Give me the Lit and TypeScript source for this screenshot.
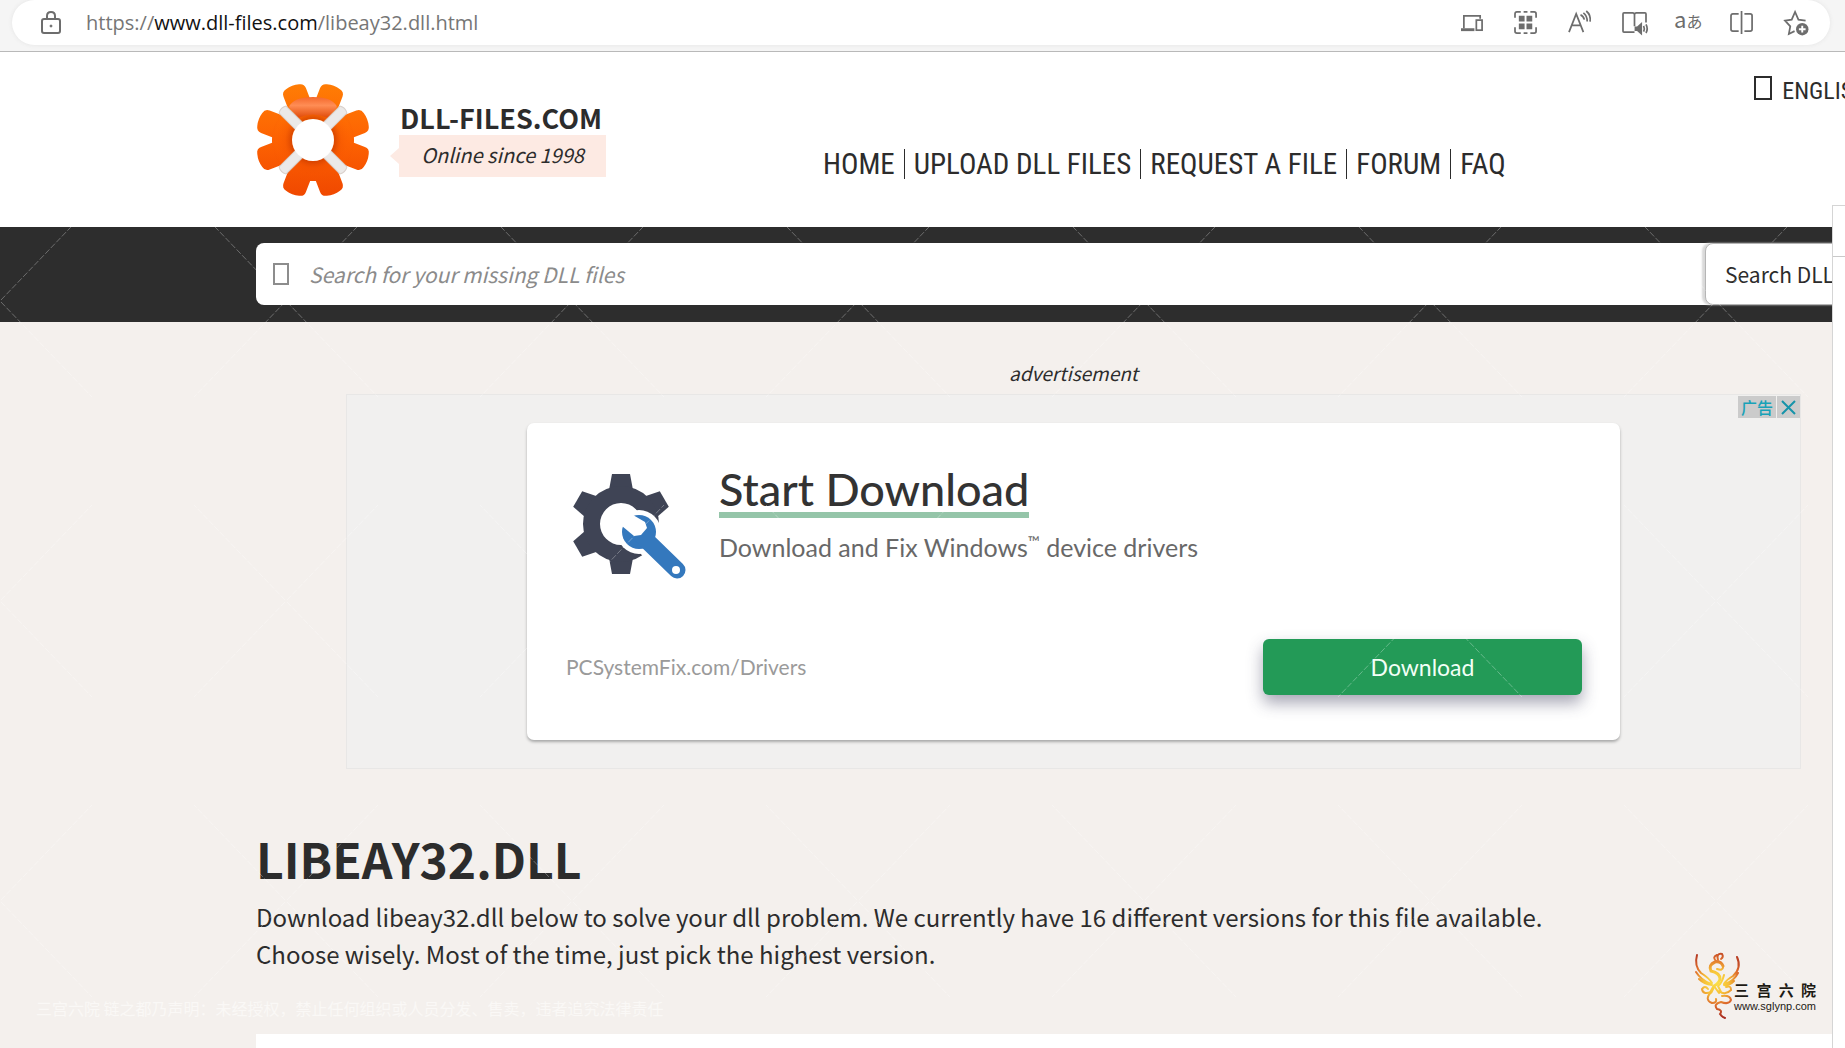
import { LitElement, html, css, svg } from "lit";
import { customElement } from "lit/decorators.js";

const TOOTH_ANGLES = [21, 69, 111, 159, 201, 249, 291, 339];
const COG_ANGLES = [0, 60, 120, 180, 240, 300];
const STRAP_ANGLES = [45, 135, 225, 315];
const NAV = ["Home", "Upload DLL Files", "Request a file", "Forum", "FAQ"];

const TOOLS = [
  {
    label: "Send to your devices",
    art: svg`<path d="M3 18V5h17v3"/><path d="M0 19.500h14" stroke-width="3"/><rect x="16" y="9.500" width="6" height="10.500"/>`,
  },
  {
    label: "Apps",
    art: svg`<path d="M0 7V3q0-2 2-2h4M16 1h4q2 0 2 2v4M22 17v4q0 2-2 2h-4M6 23H2q-2 0-2-2v-4M9 1h4M9 23h4" stroke-width="1.800"/><path d="M4 5h6v6H4zM12 5h6v6h-6zM4 13h6v6H4zM12 13h6v6h-6z" fill="currentColor" stroke="none"/>`,
  },
  {
    label: "Read aloud",
    art: svg`<path d="M0 22L7.500 3 15 22M2.500 15h10M15 2q4 3 4 9M18 0q5 4 4 11M12 4q3 1 4 5"/>`,
  },
  {
    label: "Immersive reader",
    art: svg`<path d="M12 22H1q-1 0-1-1V3q0-1 1-1h9q2 0 2 2v12M12 4q0-2 2-2h9q1 0 1 1v9"/><path d="M13 17h2l4-3.500v10l-4-3.500h-2z" fill="currentColor"/><path d="M21.500 15.500q1.500 3 0 6M24 14q2.500 4.500 0 9"/>`,
  },
  { label: "Translate", art: null },
  {
    label: "Split screen",
    art: svg`<path d="M11 0v24M8 3H2q-2 0-2 2v14q0 2 2 2h6M14 3h6q2 0 2 2v14q0 2-2 2h-6"/>`,
  },
  {
    label: "Add to favorites",
    art: svg`<path d="M10 21l-6 3 1.500-8L0 10l7-1 3.500-8L14 9l7.500 1"/><circle cx="18" cy="19" r="6.500" fill="currentColor" stroke="none"/><path d="M18 15.500v7M14.500 19h7" stroke="#fff" stroke-width="2"/>`,
  },
];

@customElement("browser-bar")
export class BrowserBar extends LitElement {
  static styles = css`
    :host { display: block; background: #f5f5f5; border-bottom: 1px solid #b9b9b9; padding: 0 15px 6px 12px; }
    .pill { display: flex; align-items: center; height: 45px; box-sizing: border-box; background: #fff; border-radius: 24px; box-shadow: 0 0 4px #e4e4e4; padding: 0 20px 0 28px; color: #6d6d6d; }
    .lock { width: 22px; height: 24px; margin-right: 24px; }
    .url { flex: 1; min-width: 0; font: 20px/28px "Open Sans", "Noto Sans", sans-serif; color: #767676; }
    .url b { font-weight: 400; color: #111; }
    .tools { display: flex; gap: 26px; }
    .tool { border: 0; background: none; padding: 0; width: 28px; height: 28px; color: inherit; display: grid; place-items: center; font: 22px/22px "Noto Sans CJK JP", sans-serif; }
    svg { fill: none; stroke: currentColor; stroke-width: 2; overflow: visible; }
    .pic { width: 23px; height: 23px; stroke-width: 1.800; }
    .kana { display: flex; align-items: baseline; line-height: 22px; margin-top: -6px; }
    .small { font-size: 16px; }
  `;
  render() {
    return html`<div class="pill">
      <svg class="lock" viewBox="0 0 22 24"><rect x="2" y="8" width="18" height="14" rx="2"/><path d="M7 8V5q0-4 4-4t4 4v3"/><circle cx="11" cy="15" r="1" fill="currentColor" stroke-width="1"/></svg>
      <div class="url">https://<b>www.dll-files.com</b>/libeay32.dll.html</div>
      <div class="tools">
        ${TOOLS.map((t) => html`<button class="tool" aria-label=${t.label}>
          ${t.art ? html`<svg class="pic" viewBox="0 0 24 24">${t.art}</svg>` : html`<span class="kana">a<span class="small">あ</span></span>`}
        </button>`)}
      </div>
    </div>`;
  }
}

@customElement("site-header")
export class SiteHeader extends LitElement {
  static styles = css`
    :host { display: block; background: #fff; color: #2c2c2c; overflow: hidden; }
    .row { display: flex; align-items: flex-start; height: 175px; box-sizing: border-box; padding: 18px 0 0 256px; white-space: nowrap; }
    .logo { width: 114px; height: 114px; margin-top: 13px; flex: none; }
    .brand { margin: 33px 0 0 29px; width: 207px; flex: none; }
    .name { font: 700 27px/30px "Noto Sans CJK SC", sans-serif; margin: 0 0 2px 1px; }
    .since { position: relative; background: #fdeae3; text-align: center; font: italic 20px/40px "Noto Sans CJK SC", sans-serif; padding-bottom: 2px; }
    .since::before { content: ""; position: absolute; left: -9px; top: 13px; border: 8px solid transparent; border-left: 0; border-right: 9px solid #fdeae3; }
    a { color: inherit; text-decoration: none; text-transform: uppercase; }
    .nav { display: flex; margin: 79px 0 0 208px; font: 29px/30px "Roboto Condensed", "Liberation Sans Narrow", "Roboto", sans-serif; }
    .nav a { padding: 0 9px; border-left: 1px solid #2c2c2c; }
    .nav a:first-child { border-left: 0; }
    .lang { display: flex; align-items: center; gap: 10px; margin: 5px -23px 0 auto; font: 24px/32px "Roboto Condensed", "Liberation Sans Narrow", "Roboto", sans-serif; }
    .box { box-sizing: border-box; width: 18px; height: 24px; border: 2px solid #2c2c2c; margin-bottom: 6px; }
  `;
  render() {
    return html`<header class="row">
      <svg class="logo" viewBox="-57 -57 114 114">
        <defs>
          <linearGradient id="fire" x1="0" y1="-57" x2="0" y2="57" gradientUnits="userSpaceOnUse"><stop offset="0" stop-color="#ff7d05"/><stop offset=".5" stop-color="#fd6202"/><stop offset="1" stop-color="#f04800"/></linearGradient>
          <radialGradient id="ring" r="44" cx="0" cy="0" gradientUnits="userSpaceOnUse"><stop offset=".5" stop-color="#c83a00" stop-opacity=".6"/><stop offset=".64" stop-color="#e84a00" stop-opacity=".2"/><stop offset=".85" stop-color="#ff5a00" stop-opacity="0"/><stop offset="1" stop-color="#e04000" stop-opacity=".15"/></radialGradient>
          <linearGradient id="shine" x1="0" y1="-43" x2="0" y2="-22" gradientUnits="userSpaceOnUse"><stop offset="0" stop-color="#f4682c"/><stop offset=".4" stop-color="#ff8d55"/><stop offset="1" stop-color="#e04a08"/></linearGradient>
          <clipPath id="teeth">
            ${TOOTH_ANGLES.map((a) => svg`<path transform="rotate(${a})" d="M-12-34L-12-51Q-12-56-7-57Q0-59 7-57Q12-56 12-51L12-34Z"/>`)}
            <circle r="41"/>
          </clipPath>
        </defs>
        <rect x="-58" y="-58" width="116" height="116" fill="url(#fire)" clip-path="url(#teeth)"/>
        <circle r="31" fill="none" stroke="url(#ring)" stroke-width="20"/>
        <path d="M-24-33Q-20-43 0-43Q20-43 24-33L15-22Q0-29-15-22Z" fill="url(#shine)"/>
        ${STRAP_ANGLES.map((a) => svg`<path transform="rotate(${a})" d="M-5-43Q0-46 5-43L5-20H-5Z" fill="#ebe9e8" stroke="#d8cfca"/>`)}
        <circle r="21" fill="#fff"/>
      </svg>
      <div class="brand"><div class="name">DLL-FILES.COM</div><div class="since">Online since 1998</div></div>
      <nav class="nav">${NAV.map((n) => html`<a href="#">${n}</a>`)}</nav>
      <a class="lang" href="#"><span class="box"></span>English</a>
    </header>`;
  }
}

@customElement("search-band")
export class SearchBand extends LitElement {
  static styles = css`
    :host { display: block; background: #2d2d2d; padding: 16px 0 17px 256px; overflow: hidden; }
    .form { display: flex; align-items: center; height: 62px; background: #fff; border-radius: 8px 0 0 8px; font: 21px/30px "Noto Sans CJK SC", sans-serif; white-space: nowrap; }
    .glyph { box-sizing: border-box; width: 16px; height: 22px; border: 2px solid #8d8d8d; margin: 0 20px 0 17px; flex: none; }
    input { flex: 1; min-width: 0; border: 0; outline: 0; padding: 0; height: 40px; font: inherit; font-style: italic; background: none; }
    input::placeholder { color: #8b8b8b; opacity: 1; }
    button { height: 62px; width: 170px; margin-right: -43px; flex: none; text-align: left; padding: 0 0 0 19px; border: 1px solid #b5b5b5; border-radius: 8px; background: #fff; box-shadow: -3px 0 2px #d8d8d8; font: inherit; color: #2c2c2c; }
  `;
  render() {
    return html`<form class="form"><span class="glyph"></span><input aria-label="Search" placeholder="Search for your missing DLL files" /><button type="button">Search DLL file</button></form>`;
  }
}

@customElement("ad-panel")
export class AdPanel extends LitElement {
  static styles = css`
    :host { display: block; }
    .frame { position: relative; border: 1px solid #e8e7e6; background: #f1f0ef; padding: 28px 180px; }
    .choices { position: absolute; top: 1px; right: 0; display: flex; gap: 1px; }
    .choices a, .choices button { display: grid; place-items: center; height: 22px; padding: 0; border: 0; background: #cbcbcb; color: #18a2b8; font: 500 16px/22px "Noto Sans CJK SC", sans-serif; text-decoration: none; }
    .choices a { width: 38px; }
    .choices button { width: 23px; }
    .x { width: 15px; height: 15px; stroke: #1794aa; stroke-width: 2; }
    .card { background: #fff; border-radius: 7px; box-shadow: 0 2px 3px #a9a9a9; box-sizing: border-box; min-height: 317px; padding: 51px 38px 45px 46px; display: flex; flex-direction: column; justify-content: space-between; font-family: "Lato", sans-serif; color: #333; }
    .top { display: flex; gap: 33px; }
    .cog { width: 113px; height: 106px; flex: none; }
    h2 { display: inline-block; margin: -8px 0 0; font: 500 45px/46px "Lato", sans-serif; border-bottom: 6px solid #95c5a9; }
    .sub { margin: 11px 0 0; font-size: 25px; line-height: 36px; color: #686868; }
    sup { font-size: 16px; line-height: 1px; }
    .bottom { display: flex; align-items: center; justify-content: space-between; }
    .site { font-size: 21px; line-height: 30px; color: #9a9a9a; margin-left: -7px; text-decoration: none; }
    .go { width: 319px; height: 56px; border: 0; border-radius: 6px; background: #239a57; color: #f2fff6; font: 23px/30px "Lato", sans-serif; box-shadow: 0 8px 16px rgba(60, 60, 90, .45); }
  `;
  render() {
    return html`<div class="frame">
      <div class="choices"><a href="#">广告</a><button aria-label="Close"><svg class="x" viewBox="0 0 15 15"><path d="M1 1l13 13M14 1L1 14"/></svg></button></div>
      <div class="card">
        <div class="top">
          <svg class="cog" viewBox="-48 -50 113 106">
            <g fill="#3f4455">
              ${COG_ANGLES.map((a) => svg`<path transform="rotate(${a})" d="M-9-50H9L12-34H-12Z"/>`)}
              <path fill-rule="evenodd" d="M0-38A38 38 0 1 1 0 38A38 38 0 1 1 0-38ZM0-21A21 21 0 1 0 0 21A21 21 0 1 0 0-21Z"/>
            </g>
            <circle cx="18" cy="8" r="22" fill="#fff"/>
            <path d="M22 10L55 46" stroke="#fff" stroke-width="30" stroke-linecap="round"/>
            <circle cx="18" cy="8" r="17" fill="#3478bd"/>
            <path d="M20 11L56 46" stroke="#3478bd" stroke-width="17" stroke-linecap="round"/>
            <path d="M-4-14L12-9L24-2L26 4L20 11L13 12L1 2Z" fill="#fff"/>
            <circle cx="55" cy="46" r="4" fill="#fff"/>
          </svg>
          <div><h2>Start Download</h2><p class="sub">Download and Fix Windows<sup>™</sup> device drivers</p></div>
        </div>
        <div class="bottom"><a class="site" href="#">PCSystemFix.com/Drivers</a><button class="go">Download</button></div>
      </div>
    </div>`;
  }
}

@customElement("phoenix-mark")
export class PhoenixMark extends LitElement {
  static styles = css`
    :host { display: flex; align-items: flex-end; color: #1d1a14; }
    .bird { width: 46px; height: 66px; margin-right: -7px; fill: none; stroke: url(#flame); stroke-linecap: round; stroke-width: 2; overflow: visible; }
    .text { margin-bottom: 7px; }
    .cn { display: flex; justify-content: space-between; font: 700 15px/20px "Noto Sans CJK SC", sans-serif; }
    .www { font: 11px/12px "Liberation Sans", sans-serif; }
  `;
  render() {
    return html`<svg class="bird" viewBox="0 0 46 66">
        <defs><radialGradient id="flame" cx="21" cy="29" r="36" gradientUnits="userSpaceOnUse"><stop offset="0" stop-color="#fbe24a"/><stop offset=".35" stop-color="#f6bf36"/><stop offset=".65" stop-color="#dd6a2c"/><stop offset="1" stop-color="#a82c20"/></radialGradient></defs>
        <path d="M2 2Q-1 13 6 20Q14 25 17 30M1 19Q6 27 16 31M4 26Q9 31 17 32"/>
        <path d="M42 4Q47 15 38 23Q31 27 29 31M43 20Q39 28 30 31M39 28Q34 33 29 32"/>
        <path d="M21 8Q17 4 22 2M23 7Q21 0 27 1Q29 4 26 6"/>
        <path d="M28 13Q26 8 20 9Q13 12 16 18Q25 20 25 26Q24 30 19 33L16 39" stroke-width="3"/>
        <path d="M28 14Q28 18 22 16M29 22Q27 30 23 33L26 39M19 33L24 40M16 39Q8 42 7 36Q10 32 13 36M24 38Q30 43 36 37Q36 32 31 34"/>
        <path d="M16 39Q9 47 17 50Q22 50 21 46M27 43Q35 42 36 47Q34 52 26 49Q18 51 22 56Q28 57 25 61Q27 64 30 65"/>
      </svg>
      <div class="text"><div class="cn"><span>三</span><span>宫</span><span>六</span><span>院</span></div><div class="www">www.sglynp.com</div></div>`;
  }
}

@customElement("app-root")
export class AppRoot extends LitElement {
  static styles = css`
    :host { display: flex; flex-direction: column; min-height: 100vh; position: relative; overflow: hidden; background: #fff; }
    .shell { flex: 1; display: grid; grid-template-columns: minmax(0, 1fr) 13px; }
    .page { display: flex; flex-direction: column; background: #f4f0ed; }
    .side { margin-top: -22px; background: #fff; border: 1px solid #d5d5d5; border-width: 1px 0 0 1px; }
    .side::before { content: ""; display: block; height: 50px; border-bottom: 1px solid #c9c9c9; }
    .content { padding: 35px 31px 0 256px; color: #2c2c2c; font-family: "Noto Sans CJK SC", sans-serif; }
    .note { margin: 0 0 6px; padding-left: 90px; text-align: center; font-size: 19px; line-height: 31px; font-style: italic; }
    .ad { margin-left: 90px; }
    h1 { margin: 54px 0 0; font-size: 48px; line-height: 70px; font-weight: 700; }
    .lead { margin: 5px 0 0; font-size: 24px; line-height: 37px; }
    .legal { margin: 0; padding: 26px 0 16px 36px; font: 16px/20px "Noto Sans CJK SC", sans-serif; color: #faf8f6; }
    .sheet { flex: 1; min-height: 14px; background: #fff; margin-left: 256px; }
    .mesh { position: absolute; inset: 227px 13px 0 0; width: calc(100% - 13px); height: calc(100% - 227px); pointer-events: none; }
    .mark { position: absolute; right: 29px; bottom: 29px; }
  `;
  render() {
    return html`
      <browser-bar></browser-bar>
      <site-header></site-header>
      <div class="shell">
        <main class="page">
          <search-band></search-band>
          <section class="content">
            <p class="note">advertisement</p>
            <ad-panel class="ad"></ad-panel>
            <h1>LIBEAY32.DLL</h1>
            <p class="lead">Download libeay32.dll below to solve your dll problem. We currently have 16 different versions for this file available.<br />Choose wisely. Most of the time, just pick the highest version.</p>
          </section>
          <p class="legal">三宫六院 链之都乃声明：未经授权，禁止任何组织或人员分发、售卖，违者追究法律责任</p>
          <section class="sheet"></section>
        </main>
        <aside class="side"></aside>
      </div>
      <svg class="mesh" aria-hidden="true">
        <defs><pattern id="mesh" width="286" height="300" y="74" patternUnits="userSpaceOnUse"><path d="M1 1L92 96M285 1L194 96M1 299L92 204M285 299L194 204" stroke="#fff" stroke-opacity=".3" stroke-dasharray="6 2" fill="none"/></pattern></defs>
        <rect width="100%" height="100%" fill="url(#mesh)"/>
      </svg>
      <phoenix-mark class="mark"></phoenix-mark>
    `;
  }
}
